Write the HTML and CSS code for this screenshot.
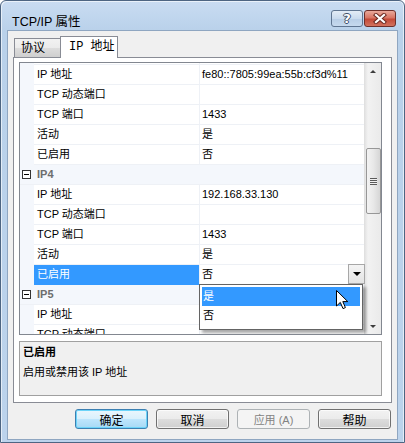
FILE: index.html
```html
<!DOCTYPE html>
<html lang="zh-CN">
<head>
    <meta charset="UTF-8">
    <title>TCP/IP 属性</title>
    <link rel="stylesheet" href="styles.css">
</head>
<body>
    <div class="window">
        <div class="titlebar">
            <span class="title">TCP/IP 属性</span>
            <div class="caption-buttons">
                <div class="cap help">?</div>
                <div class="cap close">
                    <svg width="14" height="11" viewBox="0 0 14 11">
                        <path d="M3 2 L11 9 M11 2 L3 9" stroke="#6b2a22" stroke-width="4.2" stroke-linecap="square"/>
                        <path d="M3 2 L11 9 M11 2 L3 9" stroke="#fff" stroke-width="2.2" stroke-linecap="square"/>
                    </svg>
                </div>
            </div>
        </div>
        <div class="client">
            <div class="tabs">
                <div class="tab">协议</div>
                <div class="tab active">IP 地址</div>
            </div>
            <div class="tab-panel">
                <div class="grid">
                    <div class="rows">
                        <!-- row scrolled out of view above -->
                        <div class="row"><div class="gutter"></div><div class="name"></div><div class="value"></div></div>
                        <div class="row"><div class="gutter"></div><div class="name">IP 地址</div><div class="value">fe80::7805:99ea:55b:cf3d%11</div></div>
                        <div class="row"><div class="gutter"></div><div class="name">TCP 动态端口</div><div class="value"></div></div>
                        <div class="row"><div class="gutter"></div><div class="name">TCP 端口</div><div class="value">1433</div></div>
                        <div class="row"><div class="gutter"></div><div class="name">活动</div><div class="value">是</div></div>
                        <div class="row"><div class="gutter"></div><div class="name">已启用</div><div class="value">否</div></div>
                        <div class="row category"><div class="gutter"><span class="toggle"></span></div><div class="cat-name">IP4</div></div>
                        <div class="row"><div class="gutter"></div><div class="name">IP 地址</div><div class="value">192.168.33.130</div></div>
                        <div class="row"><div class="gutter"></div><div class="name">TCP 动态端口</div><div class="value"></div></div>
                        <div class="row"><div class="gutter"></div><div class="name">TCP 端口</div><div class="value">1433</div></div>
                        <div class="row"><div class="gutter"></div><div class="name">活动</div><div class="value">是</div></div>
                        <div class="row selected"><div class="gutter"></div><div class="name">已启用</div><div class="value editing">否<span class="drop-btn"><span class="arrow-down"></span></span></div></div>
                        <div class="row category"><div class="gutter"><span class="toggle"></span></div><div class="cat-name">IP5</div></div>
                        <div class="row"><div class="gutter"></div><div class="name">IP 地址</div><div class="value"></div></div>
                        <div class="row"><div class="gutter"></div><div class="name">TCP 动态端口</div><div class="value"></div></div>
                    </div>
                    <div class="scrollbar">
                        <span class="arrow-up small"></span>
                        <div class="thumb"><span class="grip"></span></div>
                        <span class="arrow-down small"></span>
                    </div>
                    <div class="drop-list">
                        <div class="option hot">是</div>
                        <div class="option">否</div>
                    </div>
                    <svg class="pointer" width="13" height="20" viewBox="0 0 13 20">
                        <path d="M0.5 0.5 L0.5 16 L4.3 12.4 L7 18.6 L9.4 17.6 L6.8 11.6 L11.8 11.6 Z" fill="#fff" stroke="#000" stroke-width="1" stroke-linejoin="miter"/>
                    </svg>
                </div>
                <div class="desc">
                    <div class="desc-title">已启用</div>
                    <div class="desc-text">启用或禁用该 IP 地址</div>
                </div>
            </div>
            <div class="buttons">
                <div class="btn default">确定</div>
                <div class="btn">取消</div>
                <div class="btn disabled">应用 (A)</div>
                <div class="btn">帮助</div>
            </div>
        </div>
    </div>
</body>
</html>
```

FILE: styles.css
```css
* { box-sizing: border-box; }
body { margin: 0; background: #fff; font-family: "Liberation Sans", "Noto Sans CJK SC", sans-serif; font-size: 11px; color: #000; }

.window {
    width: 405px; height: 443px; display: flex; flex-direction: column;
    border: 1px solid #4d6582; border-radius: 6px 6px 0 0;
    background: linear-gradient(#c9dcf2, #b9d1ea 30px, #bcd3ec);
    box-shadow: inset 1px 1px 0 rgba(255,255,255,0.6), inset -1px 0 0 rgba(255,255,255,0.6);
}
.titlebar { height: 29px; display: flex; align-items: flex-start; padding: 0 8px 0 11px; }
.title { font-size: 12.5px; margin-top: 10px; }
.caption-buttons { margin-left: auto; margin-top: 9px; display: flex; gap: 1px; }
.cap {
    width: 32px; height: 17px; border: 1px solid #5f7591; border-radius: 3px;
    display: flex; align-items: center; justify-content: center;
}
.cap.help {
    background: linear-gradient(#e3ecf6, #cadbee 50%, #b7cde6 51%, #c6d9ee);
    color: #fff; font-weight: bold; font-size: 13px; font-family: "DejaVu Sans", sans-serif;
    text-shadow: 1px 0 0 #3d4e66, -1px 0 0 #3d4e66, 0 1px 0 #3d4e66, 0 -1px 0 #3d4e66;
}
.cap.close {
    border-color: #6e2f2a;
    background: linear-gradient(#e9a99b, #d87564 45%, #c44a38 55%, #d2725e);
}

.client {
    flex: 1; margin: 0 6px 2px 6px; background: #f0f0f0; border: 1px solid #8fa6c1;
    display: flex; flex-direction: column;
}
.tabs { display: flex; align-items: flex-end; padding: 5px 0 0 6px; height: 26px; position: relative; z-index: 1; }
.tab {
    height: 19px; width: 47px; border: 1px solid #898c95; border-bottom: none;
    background: linear-gradient(#f2f2f2, #ebebeb 50%, #dddddd 50%, #cfcfcf);
    font-size: 12px; padding: 0 0 0 6px; line-height: 18px;
}
.tab.active {
    height: 22px; width: 58px; margin-left: -1px; margin-bottom: -1px;
    background: #fff; padding: 1px 0 0 8px; font-family: "Liberation Mono", "Noto Sans CJK SC", monospace;
}

.tab-panel {
    height: 346px; margin: 0 5px; border: 1px solid #898c95; background: #fff;
    padding: 4px 0 0 5px;
}
.grid {
    width: 363px; height: 273px; border: 1px solid #828790; position: relative;
    display: flex; overflow: hidden; background: #fff;
}
.rows { width: 344px; margin-top: -18px; }
.row { display: flex; height: 20px; }
.gutter { width: 14px; background: #f4f7fc; position: relative; }
.name {
    width: 166px; padding-left: 3px; line-height: 19px;
    border-bottom: 1px solid #eef1f6; border-right: 1px solid #eef1f6; white-space: nowrap;
}
.value {
    flex: 1; padding-left: 2px; line-height: 19px; border-bottom: 1px solid #eef1f6;
    white-space: nowrap; overflow: hidden; position: relative;
}
.category { background: #f4f7fc; border-bottom: 1px solid #eef1f6; }
.cat-name { padding-left: 3px; line-height: 19px; font-weight: bold; color: #6d6d6d; }
.toggle {
    position: absolute; left: 2px; top: 5px; width: 9px; height: 9px; border: 1px solid #333; background: #fff;
}
.toggle::after { content: ""; position: absolute; left: 1px; top: 3px; width: 5px; height: 1px; background: #000; }
.selected .name { background: #3399ff; color: #fff; border-bottom-color: #3399ff; }
.value.editing { overflow: visible; }
.drop-btn {
    position: absolute; right: -1px; top: -1px; width: 17px; height: 20px;
    border: 1px solid #a7a7a7; background: linear-gradient(#f4f4f4, #e4e4e4);
    display: flex; align-items: center; justify-content: center;
}
.arrow-down { width: 0; height: 0; border-left: 4px solid transparent; border-right: 4px solid transparent; border-top: 4px solid #000; }
.arrow-up { width: 0; height: 0; border-left: 4px solid transparent; border-right: 4px solid transparent; border-bottom: 4px solid #000; }
.small { border-width: 3.5px; opacity: 0.75; }

.scrollbar {
    width: 17px; background: linear-gradient(90deg, #e3e3e3, #f2f2f2 3px, #eaeaea);
    border-left: 1px solid #e0e0e0; display: flex; flex-direction: column; align-items: center;
}
.scrollbar .arrow-up { margin-top: 7px; }
.thumb {
    margin-top: 75px; width: 15px; height: 66px; border: 1px solid #979797; border-radius: 2px;
    background: linear-gradient(90deg, #f3f3f3, #e8e8e8 50%, #d6d6d6);
    display: flex; align-items: center; justify-content: center;
}
.grip { width: 7px; height: 7px; background: repeating-linear-gradient(#5a5a5a 0 1px, #f0f0f0 1px 2px); }
.scrollbar .arrow-down { margin-top: auto; margin-bottom: 6px; }

.drop-list {
    position: absolute; left: 179px; top: 221px; width: 164px; height: 46px;
    border: 1px solid #646464; background: #fff; padding: 2px;
    box-shadow: 3px 3px 3px rgba(0,0,0,0.35);
}
.option { height: 19px; line-height: 19px; padding-left: 1px; }
.option.hot { background: #3399ff; color: #fff; }
.pointer { position: absolute; left: 316px; top: 227px; }

.desc {
    margin-top: 6px; width: 363px; height: 55px; border: 1px solid #a0a0a0; background: #f0f0f0;
    padding: 0 3px;
}
.desc-title { font-weight: bold; line-height: 20px; }
.desc-text { line-height: 20px; }

.buttons { display: flex; justify-content: flex-end; gap: 8px; padding: 6px 6px 0 0; }
.btn {
    width: 73px; height: 20px; border: 1px solid #707070; border-radius: 3px;
    background: linear-gradient(#f2f2f2, #ebebeb 50%, #dddddd 50%, #cfcfcf);
    font-size: 12px; display: flex; align-items: center; justify-content: center;
    box-shadow: inset 0 0 0 1px rgba(255,255,255,0.7);
}
.btn.default {
    border-color: #3c7fb1;
    background: linear-gradient(#eaf6fd, #d9f0fc 50%, #bee6fd 50%, #a7d9f5);
    box-shadow: inset 0 0 0 1px #6cd4f9;
}
.btn.disabled { border-color: #adb2b5; background: #f4f4f4; color: #838383; box-shadow: none; font-size: 11px; }
```
